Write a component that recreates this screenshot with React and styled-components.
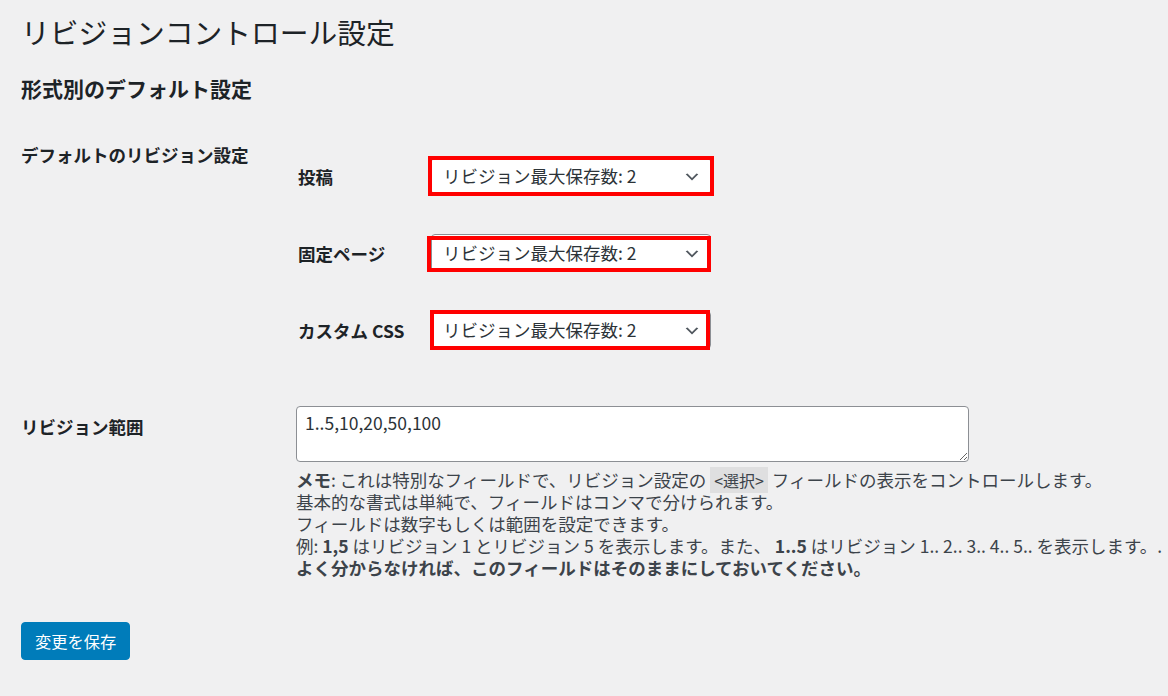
import React from "react";

// styled
import styled, { createGlobalStyle } from "styled-components";

// data
const PostTypes = [
  { id: "post", label: "投稿", mark: { top: -1, left: -3, right: -3, bottom: -1 } },
  { id: "page", label: "固定ページ", mark: { top: 2, left: -4, right: 0, bottom: 0 } },
  { id: "css", label: "カスタム CSS", mark: { top: -1, left: -1, right: 1, bottom: -1 } },
];

export default function App() {
  return (
    <>
      <GlobalStyle />
      <Page>
        <Title>リビジョンコントロール設定</Title>
        <SectionTitle>形式別のデフォルト設定</SectionTitle>
        <FormTable>
          <Row>
            <Th>デフォルトのリビジョン設定</Th>
            <Td>
              {PostTypes.map((type) => (
                <SubRow key={type.id}>
                  <SubLabel>{type.label}</SubLabel>
                  <Field>
                    <Select>
                      <span>リビジョン最大保存数: 2</span>
                      <Chevron viewBox="0 0 20 20">
                        <path d="M5 6l5 5 5-5 2 1-7 7-7-7 2-1z" />
                      </Chevron>
                    </Select>
                    <Mark
                      $top={type.mark.top}
                      $left={type.mark.left}
                      $right={type.mark.right}
                      $bottom={type.mark.bottom}
                    />
                  </Field>
                </SubRow>
              ))}
            </Td>
          </Row>
          <Row $range>
            <Th $range>リビジョン範囲</Th>
            <Td $range>
              <TextArea defaultValue="1..5,10,20,50,100" />
              <Description>
                <b>メモ</b>: これは特別なフィールドで、リビジョン設定の <Code>&lt;選択&gt;</Code> フィールドの表示をコントロールします。
                <br />
                基本的な書式は単純で、フィールドはコンマで分けられます。
                <br />
                フィールドは数字もしくは範囲を設定できます。
                <br />
                例: <b>1,5</b> はリビジョン 1 とリビジョン 5 を表示します。また、 <b>1..5</b> はリビジョン 1.. 2.. 3.. 4.. 5.. を表示します。.
                <br />
                <b>よく分からなければ、このフィールドはそのままにしておいてください。</b>
              </Description>
            </Td>
          </Row>
        </FormTable>
        <SaveButton type="button">変更を保存</SaveButton>
      </Page>
    </>
  );
}

const GlobalStyle = createGlobalStyle`
  html, body {
    margin: 0;
    background: #f0f0f1;
  }
  body {
    font-family: "Noto Sans CJK JP", "Noto Sans", sans-serif;
    color: #3c434a;
  }
`;
const Page = styled.div`
  padding: 14px 0 40px 21px;
`;
const Title = styled.h1`
  margin: 0;
  font-size: 28.75px;
  font-weight: 400;
  line-height: 36px;
  color: #1d2327;
`;
const SectionTitle = styled.h2`
  margin: 24px 0 0 0;
  font-size: 21px;
  font-weight: 700;
  line-height: 28px;
  color: #1d2327;
`;
const FormTable = styled.div`
  margin: 35px 0 0 0;
`;
const Row = styled.div`
  display: grid;
  grid-template-columns: 275px 1fr;
  margin: ${(p) => (p.$range ? "27px 0 0 0" : "0")};
`;
const Th = styled.div`
  padding: ${(p) => (p.$range ? "20px 0 0 0" : "6px 0 0 0")};
  font-size: 17.5px;
  font-weight: 700;
  line-height: 24px;
  color: #1d2327;
`;
const Td = styled.div`
  padding: ${(p) => (p.$range ? "11px 0 0 0" : "0")};
`;
const SubRow = styled.div`
  display: grid;
  grid-template-columns: 133px auto;
  align-items: center;
  height: 77px;
  padding: 0 0 0 2px;
`;
const SubLabel = styled.div`
  padding: 3px 0 0 0;
  font-size: 17.5px;
  font-weight: 700;
  line-height: 24px;
  color: #1d2327;
`;
const Field = styled.div`
  position: relative;
  width: 280px;
`;
const Select = styled.div`
  display: flex;
  align-items: center;
  justify-content: space-between;
  box-sizing: border-box;
  height: 38px;
  padding: 0 9px 0 11px;
  background: #fff;
  border: 1px solid #8c8f94;
  border-radius: 4px;
  font-size: 17.5px;
  color: #2c3338;
`;
const Chevron = styled.svg`
  width: 18px;
  height: 18px;
  margin: 2px 0 0 0;
  fill: #50575e;
`;
const Mark = styled.span`
  position: absolute;
  top: ${(p) => p.$top}px;
  left: ${(p) => p.$left}px;
  right: ${(p) => p.$right}px;
  bottom: ${(p) => p.$bottom}px;
  border: 4px solid #ff0000;
  pointer-events: none;
`;
const TextArea = styled.textarea`
  display: block;
  box-sizing: border-box;
  width: 673px;
  height: 56px;
  margin: 0;
  padding: 4px 8px;
  background: #fff;
  border: 1px solid #8c8f94;
  border-radius: 4px;
  font-family: inherit;
  font-size: 17.5px;
  line-height: 24px;
  color: #2c3338;
`;
const Description = styled.p`
  margin: 7px 0 0 0;
  font-size: 17.5px;
  line-height: 22px;
  color: #3c434a;

  b {
    font-weight: 700;
  }
`;
const Code = styled.code`
  padding: 1px 4px;
  background: rgba(0, 0, 0, 0.07);
  font-family: "Noto Sans CJK JP", sans-serif;
  font-size: 16px;
`;
const SaveButton = styled.button`
  display: block;
  margin: 43px 0 0 0;
  height: 38px;
  padding: 0 13px;
  background: #007cba;
  border: 1px solid #007cba;
  border-radius: 4px;
  font-family: inherit;
  font-size: 16.25px;
  color: #fff;
`;
